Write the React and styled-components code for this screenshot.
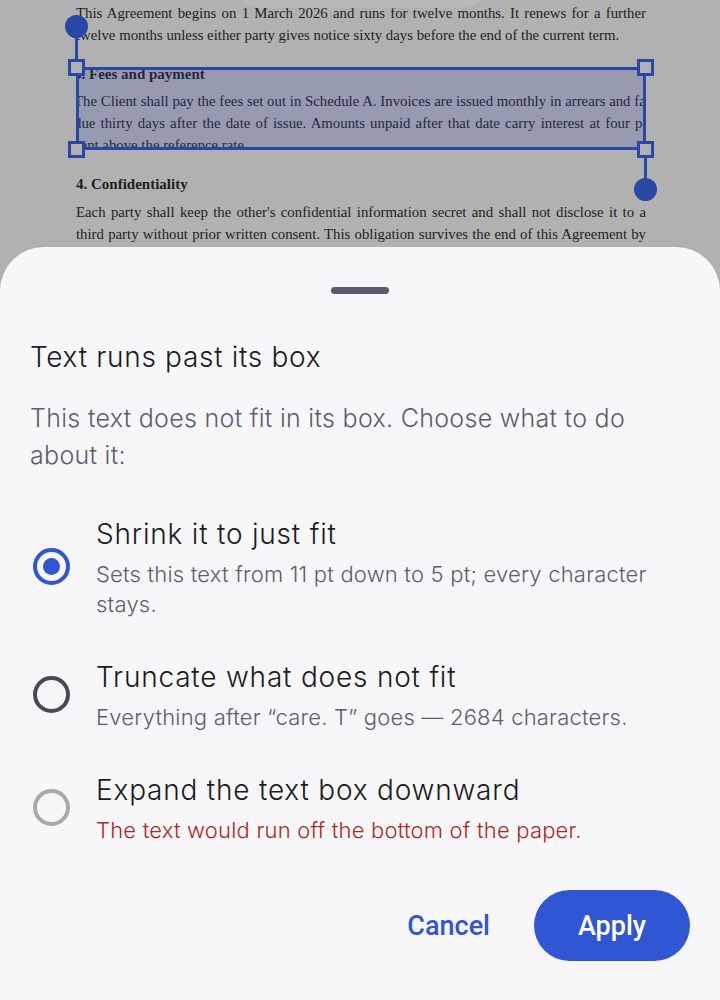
import styled, { createGlobalStyle } from "styled-components";

const Global = createGlobalStyle`
  html, body {
    margin: 0;
    padding: 0;
    background: #b1b1b1;
  }
  * { box-sizing: border-box; }
`;

const Screen = styled.div`
  width: 720px;
  height: 1000px;
  overflow: hidden;
  display: flex;
  flex-direction: column;
  background: #b1b1b1;
  position: relative;
`;

const Toolbar = styled.div`
  position: absolute;
  top: -42px;
  left: 234px;
  width: 253px;
  height: 50px;
  border-radius: 25px;
  background: #b9b9b9;
`;

const Doc = styled.div`
  height: 247px;
  flex: none;
  overflow: hidden;
  padding: 2px 74px 0 76px;
  font-family: "Liberation Serif", "Times New Roman", serif;
  font-size: 14.8px;
  line-height: 22px;
  color: #1e1e1e;
`;

const Para = styled.p`
  margin: ${(p) => p.$top || 0}px 0 0;
  text-align: justify;
`;

const Heading = styled.h4`
  margin: ${(p) => p.$top || 0}px 0 0;
  font-size: 15px;
  font-weight: bold;
  line-height: 22px;
`;

const FrameWrap = styled.div`
  position: relative;
  margin-top: 21px;
`;

const Frame = styled.div`
  height: 83px;
  overflow: hidden;
  position: relative;
`;

const FrameText = styled.div`
  width: 580px;
  margin-left: -2px;
  margin-top: -4px;
`;

const Selection = styled.div`
  position: absolute;
  inset: 0;
  border: 3px solid #2b47a5;
  background: rgba(44, 71, 170, 0.2);
`;

const Square = styled.div`
  position: absolute;
  width: 17px;
  height: 17px;
  border: 3px solid #2b47a5;
  background: #b1b1b1;
  left: ${(p) => p.$x}px;
  top: ${(p) => p.$y}px;
`;

const Stem = styled.div`
  position: absolute;
  width: 3px;
  background: #2b47a5;
  left: ${(p) => p.$x}px;
  top: ${(p) => p.$y}px;
  height: ${(p) => p.$h}px;
`;

const Knob = styled.div`
  position: absolute;
  width: 23px;
  height: 23px;
  border-radius: 50%;
  background: #2b47a5;
  left: ${(p) => p.$x}px;
  top: ${(p) => p.$y}px;
`;

const Sheet = styled.div`
  flex: 1;
  background: #f7f7f9;
  border-radius: 44px 44px 0 0;
  padding: 40px 30px 0;
  font-family: Inter, "Noto Sans", sans-serif;
  display: flex;
  flex-direction: column;
`;

const Grabber = styled.div`
  width: 58px;
  height: 7px;
  border-radius: 4px;
  background: #5a5a6e;
  align-self: center;
`;

const Title = styled.h2`
  margin: 45px 0 0;
  font-size: 28px;
  font-weight: 300;
  letter-spacing: 0.7px;
  line-height: 36px;
  color: #1b1b21;
`;

const Lead = styled.p`
  margin: 25px 0 0;
  font-size: 25px;
  font-weight: 300;
  letter-spacing: 0.3px;
  line-height: 37px;
  color: #5d5d6d;
`;

const Options = styled.div`
  margin-top: 40px;
  display: flex;
  flex-direction: column;
  gap: 38px;
`;

const Option = styled.label`
  display: flex;
  align-items: center;
  gap: 26px;
  padding-left: 3px;
`;

const Radio = styled.span`
  flex: none;
  width: 37px;
  height: 37px;
  border-radius: 50%;
  border: 4px solid ${(p) => p.$color};
  display: flex;
  align-items: center;
  justify-content: center;
  &::after {
    content: "";
    width: 17px;
    height: 17px;
    border-radius: 50%;
    background: ${(p) => (p.$checked ? p.$color : "transparent")};
  }
`;

const OptionText = styled.div`
  display: flex;
  flex-direction: column;
`;

const OptionTitle = styled.div`
  font-size: 28px;
  font-weight: 300;
  letter-spacing: 0.8px;
  line-height: 40px;
  color: #1b1b21;
`;

const OptionSub = styled.div`
  margin-top: 5px;
  font-size: 22px;
  font-weight: 300;
  letter-spacing: 0.2px;
  line-height: 30px;
  color: ${(p) => (p.$warn ? "#b3261e" : "#5d5d6d")};
`;

const Actions = styled.div`
  margin-top: 45px;
  display: flex;
  justify-content: flex-end;
  align-items: center;
  gap: 24px;
`;

const Button = styled.button`
  font-family: Roboto, "Liberation Sans", sans-serif;
  font-size: 27px;
  font-weight: 500;
  border: none;
  height: 71px;
  border-radius: 36px;
  padding: 0 ${(p) => (p.$primary ? 0 : 20)}px;
  width: ${(p) => (p.$primary ? "156px" : "auto")};
  background: ${(p) => (p.$primary ? "#3056d3" : "transparent")};
  color: ${(p) => (p.$primary ? "#ffffff" : "#3056d3")};
`;

const options = [
  {
    title: "Shrink it to just fit",
    sub: "Sets this text from 11 pt down to 5 pt; every character stays.",
    color: "#3056d3",
    checked: true,
  },
  {
    title: "Truncate what does not fit",
    sub: "Everything after \u201ccare. T\u201d goes \u2014 2684 characters.",
    color: "#4a4a56",
  },
  {
    title: "Expand the text box downward",
    sub: "The text would run off the bottom of the paper.",
    color: "#a9a9ab",
    warn: true,
  },
];

export default function App() {
  return (
    <Screen>
      <Global />
      <Doc>
        <Para>
          This Agreement begins on 1 March 2026 and runs for twelve months. It
          renews for a further twelve months unless either party gives notice
          sixty days before the end of the current term.
        </Para>
        <FrameWrap>
          <Frame>
            <FrameText>
              <Heading>3. Fees and payment</Heading>
              <Para $top={5}>
                The Client shall pay the fees set out in Schedule A. Invoices
                are issued monthly in arrears and fall due thirty days after
                the date of issue. Amounts unpaid after that date carry
                interest at four per cent above the reference rate.
              </Para>
            </FrameText>
            <Selection />
          </Frame>
          <Stem $x={-1} $y={-40} $h={40} />
          <Knob $x={-11} $y={-52} />
          <Square $x={-8} $y={-8} />
          <Square $x={561} $y={-8} />
          <Square $x={-8} $y={74} />
          <Square $x={561} $y={74} />
          <Stem $x={568} $y={90} $h={24} />
          <Knob $x={558} $y={111} />
        </FrameWrap>
        <Heading $top={23}>4. Confidentiality</Heading>
        <Para $top={6}>
          Each party shall keep the other's confidential information secret and
          shall not disclose it to a third party without prior written consent.
          This obligation survives the end of this Agreement by five years.
        </Para>
      </Doc>
      <Toolbar />
      <Sheet>
        <Grabber />
        <Title>Text runs past its box</Title>
        <Lead>
          This text does not fit in its box. Choose what to do about it:
        </Lead>
        <Options>
          {options.map((o) => (
            <Option key={o.title}>
              <Radio $color={o.color} $checked={o.checked} />
              <OptionText>
                <OptionTitle>{o.title}</OptionTitle>
                <OptionSub $warn={o.warn}>{o.sub}</OptionSub>
              </OptionText>
            </Option>
          ))}
        </Options>
        <Actions>
          <Button>Cancel</Button>
          <Button $primary>Apply</Button>
        </Actions>
      </Sheet>
    </Screen>
  );
}
